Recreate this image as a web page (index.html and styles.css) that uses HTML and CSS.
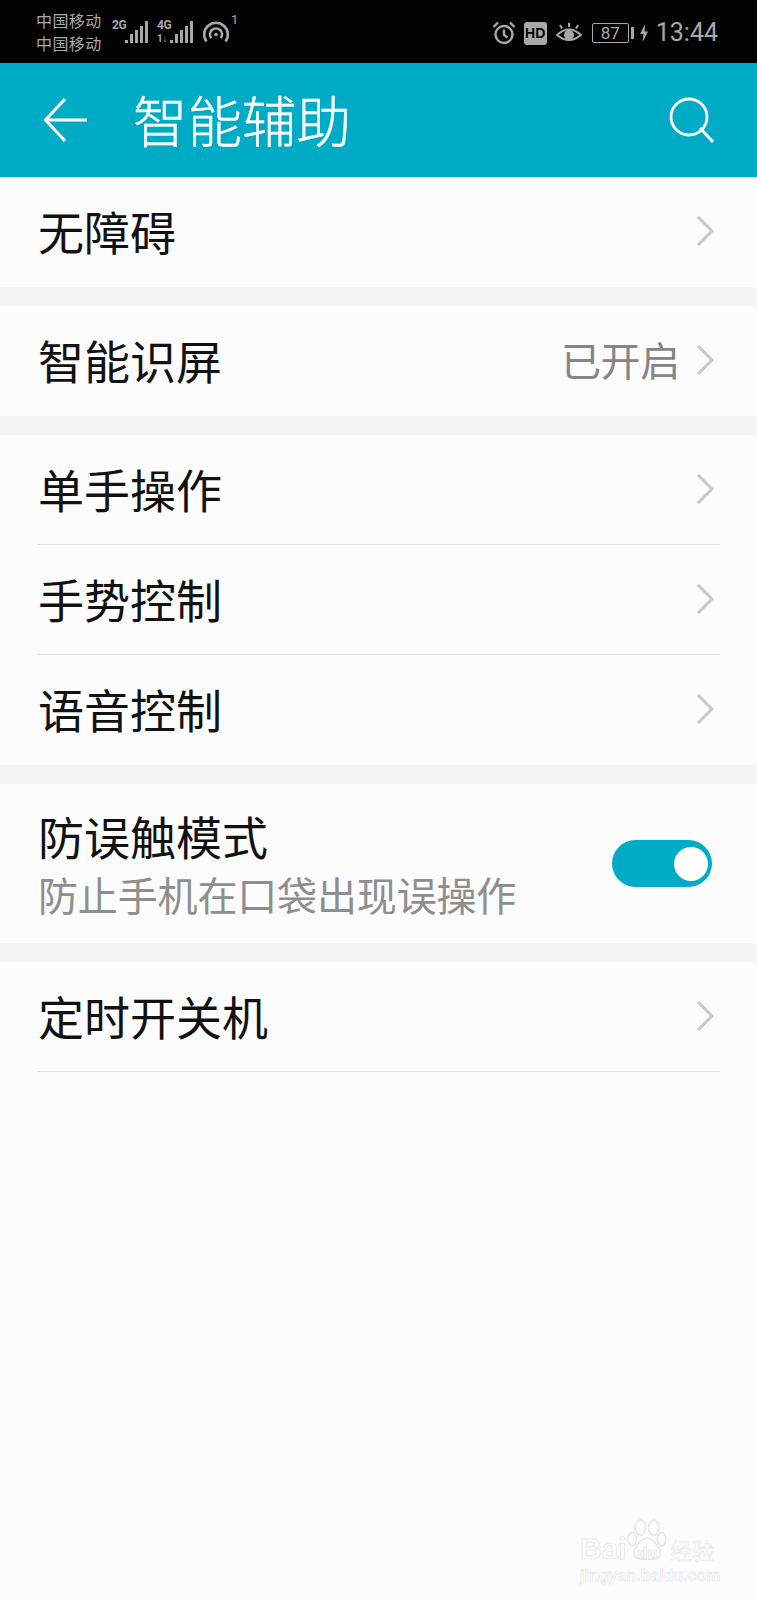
FILE: index.html
```html
<!DOCTYPE html>
<html lang="zh">
<head>
<meta charset="utf-8">
<title>智能辅助</title>
<link rel="stylesheet" href="styles.css">
</head>
<body>
<div class="screen">
  <div class="status">
    <div class="carrier"><span>中国移动</span><span>中国移动</span></div>
    <div class="sig">
      <span class="tag">2G</span>
      <svg class="bars" viewBox="0 0 24 24" width="24" height="24"><g fill="#a8a8a8"><rect x="0" y="20" width="3" height="3"/><rect x="5" y="14" width="3" height="9"/><rect x="10" y="10" width="3" height="13"/><rect x="15" y="6" width="3" height="17"/><rect x="20" y="1" width="3" height="22"/></g></svg>
    </div>
    <div class="sig sig2">
      <span class="tag tag2">4G<span class="tag-sub">1↓</span></span>
      <svg class="bars" viewBox="0 0 24 24" width="24" height="24"><g fill="#a8a8a8"><rect x="0" y="20" width="3" height="3"/><rect x="5" y="14" width="3" height="9"/><rect x="10" y="10" width="3" height="13"/><rect x="15" y="6" width="3" height="17"/><rect x="20" y="1" width="3" height="22"/></g></svg>
    </div>
    <div class="hotspot">
      <svg viewBox="0 0 28 24" width="28" height="24" fill="none" stroke="#a8a8a8" stroke-width="2.600"><path d="M4.400 21.400A11.800 11.800 0 1 1 23.600 21.400"/><path d="M9.200 18.100A6 6 0 1 1 18.800 18.100"/><circle cx="14" cy="14.500" r="1.800" fill="#a8a8a8" stroke="none"/></svg>
      <span class="sup">1</span>
    </div>
    <div class="status-right">
      <svg viewBox="0 0 24 24" width="24" height="24" fill="none" stroke="#a8a8a8" stroke-width="2.400"><circle cx="12" cy="13.500" r="8.500"/><path d="M12 8.500v5.500l3.500 2.500"/><path d="M1.500 6L6 1.500M22.500 6L18 1.500"/></svg>
      <span class="hd">HD</span>
      <svg viewBox="0 0 26 22" width="26" height="22" fill="none" stroke="#a8a8a8" stroke-width="2"><path d="M1 13Q13 2 25 13Q13 23 1 13Z"/><circle cx="13" cy="13" r="5" fill="#a8a8a8" stroke="none"/><path d="M13 5V1M6 6.500L4 3M20 6.500L22 3"/></svg>
      <div class="battery"><span class="batt-box">87</span><span class="batt-tip"></span></div>
      <svg class="bolt" viewBox="0 0 8 18" width="8" height="18"><path d="M5.200 0L0 10H3.400L2.600 18L8 7.500H4.600Z" fill="#a8a8a8"/></svg>
      <span class="time">13:44</span>
    </div>
  </div>

  <header class="appbar">
    <svg class="back" viewBox="0 0 46 46" width="46" height="46" fill="none" stroke="#fff" stroke-width="3"><path d="M44 23H3M22 2L2.500 23L22 44"/></svg>
    <h1 class="title">智能辅助</h1>
    <svg class="search" viewBox="0 0 46 46" width="46" height="46" fill="none" stroke="#fff"><circle cx="21" cy="20" r="18" stroke-width="2.800"/><path d="M32 31L45 45" stroke-width="3"/></svg>
  </header>

  <section class="group">
    <div class="row"><span class="label">无障碍</span><svg class="chev" viewBox="0 0 18 32" width="18" height="32"><path d="M2 2L16 16L2 30" fill="none" stroke="#c8c8c8" stroke-width="3"/></svg></div>
  </section>

  <section class="group">
    <div class="row"><span class="label">智能识屏</span><span class="value">已开启</span><svg class="chev" viewBox="0 0 18 32" width="18" height="32"><path d="M2 2L16 16L2 30" fill="none" stroke="#c8c8c8" stroke-width="3"/></svg></div>
  </section>

  <section class="group">
    <div class="row line"><span class="label">单手操作</span><svg class="chev" viewBox="0 0 18 32" width="18" height="32"><path d="M2 2L16 16L2 30" fill="none" stroke="#c8c8c8" stroke-width="3"/></svg></div>
    <div class="row line"><span class="label">手势控制</span><svg class="chev" viewBox="0 0 18 32" width="18" height="32"><path d="M2 2L16 16L2 30" fill="none" stroke="#c8c8c8" stroke-width="3"/></svg></div>
    <div class="row"><span class="label">语音控制</span><svg class="chev" viewBox="0 0 18 32" width="18" height="32"><path d="M2 2L16 16L2 30" fill="none" stroke="#c8c8c8" stroke-width="3"/></svg></div>
  </section>

  <section class="group">
    <div class="row tall">
      <div class="stack"><span class="label">防误触模式</span><span class="sub">防止手机在口袋出现误操作</span></div>
      <span class="switch"><span class="knob"></span></span>
    </div>
  </section>

  <section class="group">
    <div class="row line"><span class="label">定时开关机</span><svg class="chev" viewBox="0 0 18 32" width="18" height="32"><path d="M2 2L16 16L2 30" fill="none" stroke="#c8c8c8" stroke-width="3"/></svg></div>
  </section>

  <div class="watermark">
    <svg class="paw" viewBox="0 0 42 44" width="40" height="44" fill="#fcfcfc" stroke="#e4e4e4" stroke-width="1.500"><ellipse cx="5.500" cy="21" rx="4.500" ry="7"/><ellipse cx="14" cy="9" rx="5.500" ry="8"/><ellipse cx="28" cy="9" rx="5.500" ry="8"/><ellipse cx="36.500" cy="21" rx="4.500" ry="7"/><path d="M21 20C14 20 5 33 8 39C11 44 17 42 21 42C25 42 31 44 34 39C37 33 28 20 21 20Z"/></svg>
    <div class="wm-top"><span class="wm-en">Bai</span><span class="wm-du">du</span><span class="wm-cn">经验</span></div>
    <div class="wm-url">jingyan.baidu.com</div>
  </div>
</div>
</body>
</html>
```

FILE: styles.css
```css
* { box-sizing: border-box; }
html, body { margin: 0; padding: 0; }
body { width: 757px; height: 1600px; overflow: hidden; background: #fcfcfc; font-family: "Noto Sans CJK SC", "Noto Sans", sans-serif; }
.screen { position: relative; width: 757px; height: 1600px; background: #fcfcfc; }

.status { height: 63px; background: #030303; display: flex; align-items: center; color: #a8a8a8; padding-left: 36px; padding-right: 39px; }
.carrier { display: flex; flex-direction: column; width: 76px; font-size: 16px; line-height: 23px; letter-spacing: 0.400px; }
.sig { display: flex; align-items: flex-end; width: 45px; height: 24px; margin-top: 1px; }
.sig .tag { font-family: "Liberation Sans Narrow", "Roboto", sans-serif; font-weight: 700; font-size: 12px; line-height: 12px; width: 13px; align-self: flex-start; white-space: nowrap; letter-spacing: -0.500px; margin-top: -1px; }
.tag-sub { display: block; font-size: 10px; line-height: 10px; margin-top: 3px; }
.sig2 { width: 45px; }
.hotspot { display: flex; align-items: flex-start; height: 24px; }
.sup { font-family: "Roboto", sans-serif; font-size: 13px; line-height: 12px; margin-left: 1px; margin-top: -6px; }
.status-right { margin-left: auto; display: flex; align-items: center; padding-top: 3px; }
.hd { width: 23px; height: 23px; border-radius: 3px; background: #a8a8a8; color: #030303; font-family: "Liberation Sans", sans-serif; font-weight: 700; font-size: 14px; line-height: 23px; text-align: center; margin-left: 8px; margin-right: 9px; }
.battery { display: flex; align-items: center; margin-left: 10px; }
.batt-box { width: 37px; height: 20px; border: 1px solid #a8a8a8; border-radius: 2px; font-family: "Roboto", sans-serif; font-size: 17px; line-height: 18px; text-align: center; }
.batt-tip { width: 3px; height: 12px; margin-left: 2px; background: #a8a8a8; border-radius: 0 1px 1px 0; }
.bolt { margin-left: 6px; }
.time { font-family: "Roboto", sans-serif; font-size: 25px; line-height: 30px; margin-left: 8px; }

.appbar { height: 114px; background: #00acc5; display: flex; align-items: center; padding-left: 43px; padding-right: 43px; color: #fff; }
.title { margin: 0 0 0 44px; font-weight: 300; font-size: 54.500px; line-height: 70px; padding-bottom: 2px; flex: 1; -webkit-text-stroke: 0.400px #fff; }

.group { margin-bottom: 19px; background: #fcfcfc; box-shadow: 0 19px 0 #f5f5f5; }
.group:last-of-type { box-shadow: none; }
.row { height: 110px; display: flex; align-items: center; margin-left: 37px; margin-right: 37px; padding-left: 1px; padding-right: 6px; padding-bottom: 2px; }
.row.line { border-bottom: 1px solid #e0e0e0; }
.label { font-size: 46px; line-height: 60px; color: #111; flex: 1; padding-bottom: 2px; }
.value { font-size: 40px; letter-spacing: -0.300px; color: #858585; line-height: 50px; margin-right: 16px; padding-bottom: 2px; }
.chev { flex: none; }
.row.tall { height: 159px; padding-bottom: 0; }
.stack { display: flex; flex-direction: column; flex: 1; gap: 3px; }
.stack .label { flex: none; line-height: 58px; padding-bottom: 0; }
.sub { font-size: 40px; letter-spacing: -0.150px; line-height: 54px; color: #8e8e8e; }
.switch { width: 100px; height: 47px; border-radius: 24px; background: #00acc5; position: relative; flex: none; margin-right: 2px; }
.knob { position: absolute; right: 4px; top: 7px; width: 34px; height: 34px; border-radius: 50%; background: #fff; }

.watermark { position: absolute; left: 580px; top: 1518px; width: 150px; height: 70px; color: #fcfcfc; }
.paw { position: absolute; left: 47px; top: 0; }
.wm-top { position: absolute; left: 0; top: 11px; display: flex; align-items: baseline; white-space: nowrap; -webkit-text-stroke: 0.700px #e4e4e4; }
.wm-en { font-family: "Liberation Sans", sans-serif; font-weight: 700; font-size: 30px; line-height: 40px; width: 47px; }
.wm-du { font-family: "Liberation Sans", sans-serif; font-weight: 700; font-size: 17px; width: 43px; padding-left: 10px; }
.wm-cn { font-size: 22px; line-height: 40px; -webkit-text-stroke: 0.500px #e6e6e6; }
.wm-url { position: absolute; left: 0; top: 49px; font-family: "Liberation Sans", sans-serif; font-weight: 700; font-size: 16px; line-height: 18px; white-space: nowrap; -webkit-text-stroke: 0.500px #e2e2e2; }
```
